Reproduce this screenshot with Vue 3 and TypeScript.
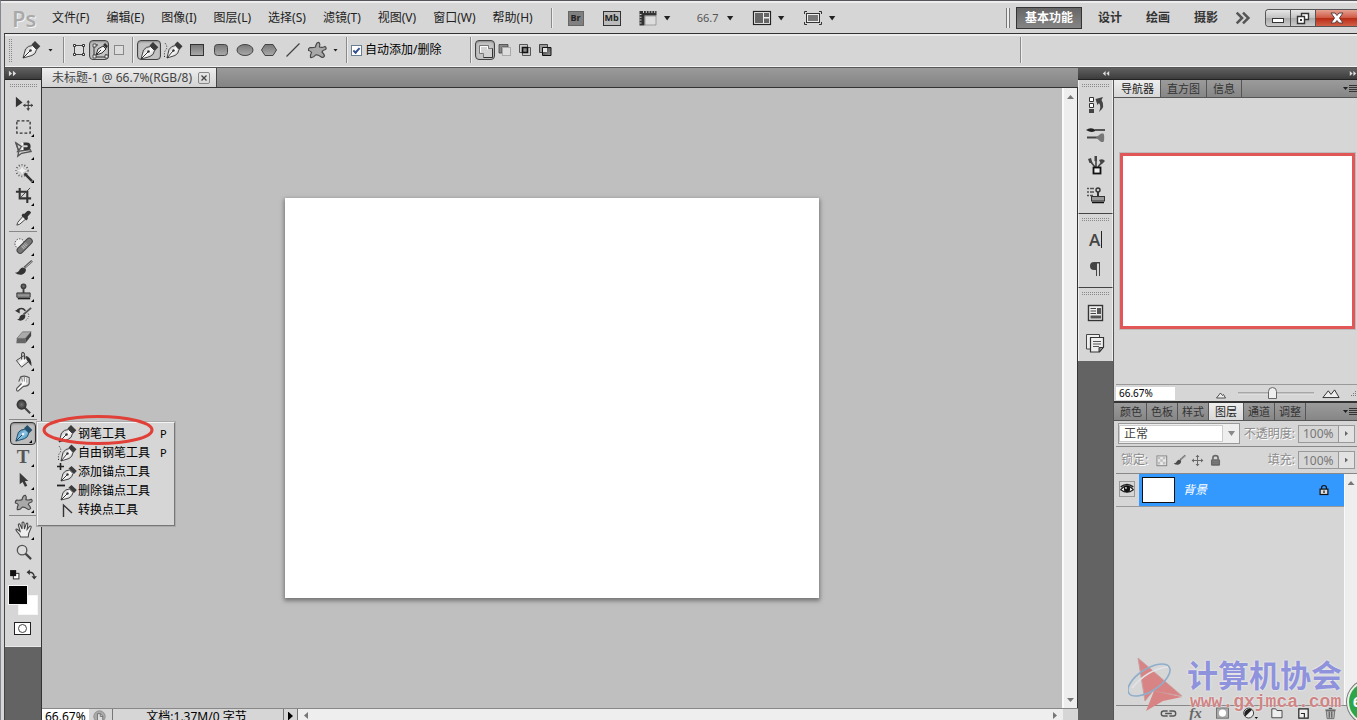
<script setup lang="ts">
import { ref } from 'vue'

interface Tool {
  id: string
  label: string
  more?: boolean
}

const menus = ['文件(F)', '编辑(E)', '图像(I)', '图层(L)', '选择(S)', '滤镜(T)', '视图(V)', '窗口(W)', '帮助(H)']
const workspaces = ['基本功能', '设计', '绘画', '摄影']

const toolGroups: Tool[][] = [
  [
    { id: 'move', label: '移动工具' },
    { id: 'marquee', label: '矩形选框工具', more: true },
    { id: 'lasso', label: '磁性套索工具', more: true },
    { id: 'wand', label: '魔棒工具', more: true },
    { id: 'crop', label: '裁剪工具', more: true },
    { id: 'dropper', label: '吸管工具', more: true },
  ],
  [
    { id: 'heal', label: '修复画笔工具', more: true },
    { id: 'brush', label: '画笔工具', more: true },
    { id: 'stamp', label: '仿制图章工具', more: true },
    { id: 'history', label: '历史记录画笔工具', more: true },
    { id: 'eraser', label: '橡皮擦工具', more: true },
    { id: 'bucket', label: '油漆桶工具', more: true },
    { id: 'smudge', label: '涂抹工具', more: true },
    { id: 'dodge', label: '减淡工具', more: true },
  ],
  [
    { id: 'bluepen', label: '钢笔', more: true },
    { id: 'type', label: '文字工具', more: true },
    { id: 'arrow', label: '路径选择工具', more: true },
    { id: 'blob', label: '自定形状工具', more: true },
  ],
  [
    { id: 'hand', label: '抓手工具', more: true },
    { id: 'zoom', label: '缩放工具' },
  ],
]

const penMenu = [
  { icon: 'pen', label: '钢笔工具', key: 'P' },
  { icon: 'freepen', label: '自由钢笔工具', key: 'P' },
  { icon: 'addpen', label: '添加锚点工具', key: '' },
  { icon: 'delpen', label: '删除锚点工具', key: '' },
  { icon: 'convert', label: '转换点工具', key: '' },
]

const pathModes = [
  { id: 'shapelayer', label: '形状图层' },
  { id: 'pathmode', label: '路径' },
  { id: 'fillmode', label: '填充像素' },
]
const shapes = [
  { id: 'pen', label: '钢笔' },
  { id: 'freepen', label: '自由钢笔' },
  { id: 'rect', label: '矩形' },
  { id: 'rrect', label: '圆角矩形' },
  { id: 'ellipse', label: '椭圆' },
  { id: 'polygon', label: '多边形' },
  { id: 'line', label: '直线' },
  { id: 'blob', label: '自定形状' },
]
const combines = [
  { id: 'union', label: '添加到路径区域' },
  { id: 'subtract', label: '从路径区域减去' },
  { id: 'intersect', label: '交叉路径区域' },
  { id: 'exclude', label: '重叠路径区域除外' },
]
const dockGroups = [
  [
    { id: 'd-history', label: '历史记录' },
    { id: 'd-brushes', label: '画笔' },
    { id: 'd-presets', label: '画笔预设' },
    { id: 'd-clone', label: '仿制源' },
  ],
  [
    { id: 'd-char', label: '字符' },
    { id: 'd-para', label: '段落' },
  ],
  [
    { id: 'd-comps', label: '图层复合' },
    { id: 'd-notes', label: '注释' },
  ],
]
const navTabs = ['导航器', '直方图', '信息']
const layerTabs = ['颜色', '色板', '样式', '图层', '通道', '调整']
const locks = [
  { id: 'checker', label: '锁定透明像素' },
  { id: 'brush', label: '锁定图像像素' },
  { id: 'cross', label: '锁定位置' },
  { id: 'padlock', label: '锁定全部' },
]
const layerActions = [
  { id: 'link', label: '链接图层' },
  { id: 'fx', label: '图层样式' },
  { id: 'mask', label: '图层蒙版' },
  { id: 'adjust', label: '调整图层' },
  { id: 'folder', label: '新建组' },
  { id: 'newlayer', label: '新建图层' },
  { id: 'trash', label: '删除图层' },
]

const workspace = ref('基本功能')
const activeTool = ref('bluepen')
const navTab = ref('导航器')
const layerTab = ref('图层')
const shape = ref('pen')
const autoAdd = ref(true)
const navZoom = ref(45)
</script>

<template>
  <div class="app">
    <svg class="defs" aria-hidden="true">
      <defs>
        <linearGradient id="g-nib" x1="0" y1="0" x2="1" y2="1">
          <stop offset="0" stop-color="#999" /><stop offset=".5" stop-color="#fff" /><stop offset="1" stop-color="#aaa" />
        </linearGradient>
        <linearGradient id="g-blue" x1="0" y1="0" x2="1" y2="1">
          <stop offset="0" stop-color="#2f6d94" /><stop offset=".5" stop-color="#8cc8e8" /><stop offset="1" stop-color="#2e739e" />
        </linearGradient>
        <linearGradient id="g-gray" x1="0" y1="0" x2="0" y2="1">
          <stop offset="0" stop-color="#777" /><stop offset="1" stop-color="#aaa" />
        </linearGradient>
        <linearGradient id="g-dark" x1="0" y1="0" x2="1" y2="1">
          <stop offset="0" stop-color="#333" /><stop offset="1" stop-color="#999" />
        </linearGradient>
        <radialGradient id="g-ball"><stop offset="0" stop-color="#777" /><stop offset="1" stop-color="#2c2c2c" /></radialGradient>
      </defs>
      <symbol id="pen" viewBox="0 0 20 20">
        <path d="M2 18 4.500 9Q7 5.500 11.500 5.500L15.500 9.500Q15 14 11 15.500Z" fill="url(#g-nib)" stroke="#444" />
        <path d="M10.500 4.500 14 1 19.300 6.300 16 9.800Z" fill="#3c3c3c" />
        <path d="M2 18 9 11" stroke="#333" /><circle cx="9.500" cy="10.500" r="1.300" fill="#333" />
      </symbol>
      <symbol id="bluepen" viewBox="0 0 20 20">
        <path d="M2 18 4.500 9Q7 5.500 11.500 5.500L15.500 9.500Q15 14 11 15.500Z" fill="url(#g-blue)" stroke="#204a66" />
        <path d="M10.500 4.500 14 1 19.300 6.300 16 9.800Z" fill="#24516e" />
        <path d="M2 18 9 11" stroke="#173d58" /><circle cx="9.500" cy="10.500" r="1.300" fill="#eef" />
      </symbol>
      <symbol id="freepen" viewBox="0 0 20 20">
        <path d="M4 18 6 9.500Q8.500 5.500 12.500 5.500L16 9.500Q15.500 14 12 15.500Z" fill="url(#g-nib)" stroke="#444" />
        <path d="M11.500 4.500 14.500 1.500 19.500 6.300 16.500 9.700Z" fill="#3c3c3c" />
        <path d="M4 18 10 11" stroke="#333" /><circle cx="10.500" cy="10.500" r="1.200" fill="#333" />
        <path d="M1.500 17V14Q1 12 3 9.500T2 3" fill="none" stroke="#333" stroke-dasharray="1.200 1.500" />
      </symbol>
      <symbol id="addpen" viewBox="0 0 20 20">
        <path d="M4 19 6 11.500Q8.500 8 12.500 8L16 11.500Q15.500 15 12 17Z" fill="url(#g-nib)" stroke="#444" />
        <path d="M11.500 6.500 14.500 4 19.800 9 17 12Z" fill="#3c3c3c" />
        <path d="M4 19 10 13" stroke="#333" /><circle cx="10.500" cy="12.500" r="1.200" fill="#333" />
        <path d="M0 4.500H7M3.500 1V8" stroke="#222" stroke-width="1.600" />
      </symbol>
      <symbol id="delpen" viewBox="0 0 20 20">
        <path d="M4 19 6 11.500Q8.500 8 12.500 8L16 11.500Q15.500 15 12 17Z" fill="url(#g-nib)" stroke="#444" />
        <path d="M11.500 6.500 14.500 4 19.800 9 17 12Z" fill="#3c3c3c" />
        <path d="M4 19 10 13" stroke="#333" /><circle cx="10.500" cy="12.500" r="1.200" fill="#333" />
        <path d="M0 4.500H8" stroke="#222" stroke-width="1.800" />
      </symbol>
      <symbol id="convert" viewBox="0 0 20 20">
        <path d="M6.500 17V5L15 13" fill="none" stroke="#333" stroke-width="1.400" />
      </symbol>
      <symbol id="move" viewBox="0 0 20 20">
        <path d="M2 3V14L9 9Z" fill="#333" />
        <path d="M15 7V17M10 12H20" stroke="#444" stroke-width="1.200" />
        <path d="M13 9 15 6.500 17 9ZM13 15 15 17.500 17 15ZM12 10 9.500 12 12 14ZM18 10 20 12 18 14Z" fill="#444" />
      </symbol>
      <symbol id="marquee" viewBox="0 0 20 20">
        <rect x="3" y="4" width="14" height="13" fill="none" stroke="#333" stroke-width="1.400" stroke-dasharray="3 2" />
      </symbol>
      <symbol id="lasso" viewBox="0 0 20 20">
        <path d="M2 3 8 7 4 12 17 10 18 12 8 14 4 17 5 12Z" fill="none" stroke="#555" stroke-width="1.400" />
        <path d="M2 3 5 12" stroke="#555" stroke-width="1.400" />
        <path d="M9 4H13.500A2.500 2.500 0 0 1 13.500 9H9" fill="none" stroke="#333" stroke-width="3" />
        <path d="M8 2.500H10V5.500H8ZM8 7.500H10V10.500H8Z" fill="#fff" />
      </symbol>
      <symbol id="wand" viewBox="0 0 20 20">
        <path d="M11 11 19 19" stroke="#333" stroke-width="2.600" />
        <circle cx="8.500" cy="8" r="6" fill="none" stroke="#555" stroke-width="2" stroke-dasharray="1 2" />
        <path d="M8.500 2 10 6 14.500 8 10 10 8.500 14 7 10 2.500 8 7 6Z" fill="#eee" stroke="#aaa" stroke-width=".5" />
      </symbol>
      <symbol id="crop" viewBox="0 0 20 20">
        <path d="M6 2V13H18M2 6H14V18" fill="none" stroke="#333" stroke-width="2.200" /><path d="M6 13 17 2" stroke="#444" />
      </symbol>
      <symbol id="dropper" viewBox="0 0 20 20">
        <path d="M3 17 4 14 10 7 13 10 6 16Z" fill="#eee" stroke="#444" />
        <path d="M9 5 11 5 14 2Q17 1 18 4L14.500 8V10.500L13 12 8 7Z" fill="#333" />
      </symbol>
      <symbol id="heal" viewBox="0 0 20 20">
        <circle cx="6" cy="8" r="5" fill="#eee" stroke="#222" stroke-dasharray="1.200 1.600" />
        <path d="M6.500 15 16 5.500" stroke="#444" stroke-width="7.500" stroke-linecap="round" />
        <path d="M6.500 15 16 5.500" stroke="#777" stroke-width="5.500" stroke-linecap="round" /><path d="M9 12.500 13.500 8" stroke="#bbb" stroke-width="4" stroke-dasharray="1 1" />
      </symbol>
      <symbol id="brush" viewBox="0 0 20 20">
        <path d="M11 9 19 2" stroke="#555" stroke-width="2.500" /><path d="M12 8.500 19 2.500" stroke="#bbb" />
        <path d="M1 14.500Q5 14 6 11 9 7 12.500 10.500 13 15 8 16.500 4 17 1 14.500Z" fill="#333" />
      </symbol>
      <symbol id="stamp" viewBox="0 0 20 20">
        <circle cx="10" cy="4.500" r="3" fill="url(#g-ball)" /><path d="M9 6H11V12H9Z" fill="#444" />
        <path d="M3 11.500H17V16H3Z" fill="url(#g-gray)" stroke="#333" /><path d="M4 17.500H17" stroke="#222" stroke-width="1.500" />
      </symbol>
      <symbol id="history" viewBox="0 0 20 20">
        <path d="M10 10 18 3" stroke="#555" stroke-width="2" /><path d="M3 15Q6 15 6 12 9 8.500 12 11 12 15.500 7 16.500 5 16.500 3 15Z" fill="#333" />
        <path d="M3 6Q8 1.500 12 6" fill="none" stroke="#333" stroke-width="1.600" /><path d="M1 6 6 4V9Z" fill="#333" />
        <path d="M15 9Q17 14 11 17" fill="none" stroke="#444" stroke-dasharray="1 1.500" />
      </symbol>
      <symbol id="eraser" viewBox="0 0 20 20">
        <path d="M3 11 9 4H18L12 11Z" fill="#aaa" stroke="#666" stroke-width=".7" /><path d="M3 11H12V16H2.500Z" fill="#666" /><path d="M12 11 18 4V8.500L12 16Z" fill="#444" />
      </symbol>
      <symbol id="bucket" viewBox="0 0 20 20">
        <path d="M2.500 10 10 5 15.500 11 8 17Z" fill="url(#g-nib)" stroke="#444" /><path d="M8 9V3Q9 0 11 3V9" fill="none" stroke="#444" stroke-width="1.200" />
        <path d="M12 5Q18.500 6 18.500 16L14.500 11Z" fill="#333" />
      </symbol>
      <symbol id="smudge" viewBox="0 0 20 20">
        <path d="M5 8 7 3Q12 1 16 4V10Q15 13 10 13L4 18Q2 18 3 15L8 10" fill="url(#g-nib)" stroke="#555" stroke-width="1.200" /><path d="M8 4 9 8M11 3V8M13.500 4V9" stroke="#777" stroke-width=".8" />
      </symbol>
      <symbol id="dodge" viewBox="0 0 20 20">
        <path d="M11 11 17 17" stroke="#444" stroke-width="2.200" /><circle cx="8" cy="8" r="5.300" fill="url(#g-ball)" />
      </symbol>
      <symbol id="arrow" viewBox="0 0 20 20">
        <path d="M6 3V15L9 12.500 11.500 17.500 14 16.500 11.500 11.500H15Z" fill="#3a3a3a" />
      </symbol>
      <symbol id="blob" viewBox="0 0 20 20">
        <path d="M9 5Q10 2 12 2.500 13.500 4 12.500 7 15 8 18 6.500 20 8 18.500 9.500 15.500 10 15 12 17 14 17.500 16 16 18.500 13.500 16.500 11 14.500 8.500 15 6.500 18 3.500 17.500 3 15 4.500 12.500 4 11 1.500 10.500 1 8.500 3 7.500 6 8 8.500 7Z" fill="#a8a8a8" stroke="#484848" stroke-width="1.200" />
      </symbol>
      <symbol id="hand" viewBox="0 0 20 20">
        <path d="M7 18Q6 15 3 12 1 9.500 3 9.500L6.500 12 4.500 5Q5.500 3 6.500 5L8.500 9.500 8.500 3Q9.500 1 10.500 3L11 9.500 13 3.500Q14.500 2.500 14.500 4.500L13.800 10 16.500 6.500Q18.500 6 18 8L15.500 14 15 18Z" fill="#eee" stroke="#444" stroke-width="1.100" />
      </symbol>
      <symbol id="zoom" viewBox="0 0 20 20">
        <path d="M12 11 18 17" stroke="#444" stroke-width="2.400" /><circle cx="8.500" cy="7.500" r="5" fill="#ddd" stroke="#555" stroke-width="1.400" />
      </symbol>
      <symbol id="shapelayer" viewBox="0 0 20 20">
        <rect x="5.500" y="5.500" width="9" height="9" fill="#ddd" stroke="#444" />
        <path d="M4.500 4.500H6.500V6.500H4.500ZM13.500 4.500H15.500V6.500H13.500ZM4.500 13.500H6.500V15.500H4.500ZM13.500 13.500H15.500V15.500H13.500Z" fill="#fff" stroke="#333" />
      </symbol>
      <symbol id="pathmode" viewBox="0 0 20 20">
        <path d="M4 4V16H16V13M4 4H8" fill="none" stroke="#333" /><path d="M3 3H6V6H3ZM3 14H6V17H3ZM15 14H18V17H15Z" fill="#eee" stroke="#333" stroke-width=".8" />
        <path d="M6 14 8 8 13 5 16 8 12 12Z" fill="url(#g-nib)" stroke="#333" /><path d="M13 4 15 2 18 5 16.500 7.500Z" fill="#333" /><path d="M6 14 11 9" stroke="#333" />
      </symbol>
      <symbol id="fillmode" viewBox="0 0 20 20"><rect x="5.500" y="5.500" width="9" height="9" fill="#ddd" stroke="#888" /></symbol>
      <symbol id="rect" viewBox="0 0 20 20"><rect x="3.500" y="4.500" width="13" height="11" fill="url(#g-gray)" stroke="#333" /></symbol>
      <symbol id="rrect" viewBox="0 0 20 20"><rect x="3.500" y="4.500" width="13" height="11" rx="3" fill="url(#g-gray)" stroke="#444" /></symbol>
      <symbol id="ellipse" viewBox="0 0 20 20"><ellipse cx="10" cy="10" rx="8" ry="5.500" fill="url(#g-gray)" stroke="#444" /></symbol>
      <symbol id="polygon" viewBox="0 0 20 20"><path d="M6 4.500H14L17.500 10 14 15.500H6L2.500 10Z" fill="url(#g-gray)" stroke="#444" /></symbol>
      <symbol id="line" viewBox="0 0 20 20"><path d="M3.500 16.500 16.500 3.500" stroke="#444" stroke-width="1.300" /></symbol>
      <symbol id="union" viewBox="0 0 20 20"><path d="M3.500 4.500H12.500V7.500H16.500V16.500H7.500V12.500H3.500Z" fill="#d2d2d2" stroke="#777" /><path d="M4.500 11.500V5.500H11.500V8.500" fill="none" stroke="#fff" /><path d="M7.500 16.500H16.500V7.500" fill="none" stroke="#333" /></symbol>
      <symbol id="subtract" viewBox="0 0 20 20"><path d="M4 13V4.500H13V7H7V13Z" fill="#888" stroke="#444" stroke-width=".8" /><rect x="7.500" y="7.500" width="8" height="8" fill="#ddd" stroke="#aaa" /></symbol>
      <symbol id="intersect" viewBox="0 0 20 20"><path d="M4.500 4.500H12.500V12.500H4.500ZM7.500 7.500H15.500V15.500H7.500Z" fill="#ccc" stroke="#555" /><path d="M7.500 7.500H12.500V12.500H7.500Z" fill="#888" stroke="#111" stroke-width="1.600" /></symbol>
      <symbol id="exclude" viewBox="0 0 20 20"><path d="M4.500 4.500H12.500V12.500H4.500Z" fill="#999" stroke="#444" /><path d="M7.500 7.500H16V15.500H7.500Z" fill="url(#g-dark)" stroke="#111" /><path d="M8 8H12V12H8Z" fill="#e5e5e5" /></symbol>
      <symbol id="ruler" viewBox="0 0 20 20"><path d="M1.500 3H18.500V7.500H6.500V17.500H1.500Z" fill="#333" /><path d="M7 8H18V17H7Z" fill="#ddd" stroke="#777" stroke-width=".6" /><path d="M5 4H18M2.500 6V17" stroke="#ccc" stroke-width="2" stroke-dasharray="1 1.800" /></symbol>
      <symbol id="layout" viewBox="0 0 20 20"><rect x="1.500" y="3.500" width="17" height="13" fill="#eee" stroke="#222" stroke-width="1.200" /><path d="M3 5H11V15H3ZM12 5H17V9H12ZM12 10.500H17V15H12Z" fill="#666" /></symbol>
      <symbol id="screen" viewBox="0 0 20 20"><path d="M1.500 6V3.500H4M16 3.500H18.500V6M18.500 14V16.500H16M4 16.500H1.500V14" fill="none" stroke="#333" /><rect x="3.500" y="5.500" width="13" height="9" fill="#eee" stroke="#333" /><path d="M5 7H15V13H5Z" fill="#777" /></symbol>
      <symbol id="d-history" viewBox="0 0 20 20"><path d="M3.500 2.500H7.500V6.500H3.500ZM3.500 8.500H7.500V12.500H3.500Z" fill="#fff" stroke="#333" /><path d="M3 14H8V18H3Z" fill="#444" /><path d="M9.500 4 17 2 15.500 5Q20 12 13 17 15.500 11 13 8L11.500 10Z" fill="#444" /></symbol>
      <symbol id="d-brushes" viewBox="0 0 20 20"><path d="M0 5Q4 2 8 4L10 5.500Q6 8.500 0 5Z" fill="#222" /><path d="M9 5H19" stroke="#555" stroke-width="2" /><path d="M1 12.500H12" stroke="#444" stroke-width="2" /><path d="M10 12.500 15 8.500H17.500Q19 12 17.500 17H15Z" fill="#777" /></symbol>
      <symbol id="d-presets" viewBox="0 0 20 20"><path d="M10 13V4M9 12 4 6M12 12 16 7" stroke="#444" stroke-width="1.600" /><path d="M8.500 1H11V6H8.500ZM2 4 5 3 6.500 8 3.500 8ZM13 5Q17 3 19 6L15.500 9.500Z" fill="#444" /><rect x="7.500" y="12.500" width="7" height="6" fill="#eee" stroke="#111" stroke-width="1.800" /></symbol>
      <symbol id="d-clone" viewBox="0 0 20 20"><path d="M1 3.500H3M1 7H3M1 10.500H3M4 3.500H8M4 7H8M4 10.500H7" stroke="#555" stroke-width="1.500" /><circle cx="12" cy="5" r="2" fill="#ccc" stroke="#333" stroke-width="1.400" /><path d="M12 7V12" stroke="#333" stroke-width="2" /><rect x="5.500" y="11.500" width="13" height="4.500" fill="#999" stroke="#333" /><path d="M6 17.500H18" stroke="#111" stroke-width="1.500" /></symbol>
      <symbol id="d-para" viewBox="0 0 20 20"><path d="M14 3H8A4 4 0 0 0 8 11H10V17H11V4.500H13V17H14Z" fill="#444" /></symbol>
      <symbol id="d-comps" viewBox="0 0 20 20"><rect x="2.500" y="2.500" width="14" height="15" fill="#eee" stroke="#333" stroke-width="1.400" /><path d="M4.500 5.500H10M4.500 8H10M4.500 10.500H10" stroke="#444" /><path d="M11 5H15V11H11ZM4.500 12.500H15V15.500H4.500Z" fill="#555" /></symbol>
      <symbol id="d-notes" viewBox="0 0 20 20"><path d="M.5 1.500H13.500V16H.5Z" fill="#eee" stroke="#444" /><path d="M4.500 4.500H17.500V14L13.500 19H4.500Z" fill="#eee" stroke="#333" stroke-width="1.200" /><path d="M7 8.500H15M7 11H15M7 13.500H13" stroke="#555" /><path d="M13 19V14.500H17.500Z" fill="#888" stroke="#333" /></symbol>
      <symbol id="checker" viewBox="0 0 20 20"><rect x="3" y="3" width="15" height="15" fill="#eee" stroke="#777" stroke-width="1.500" /><path d="M4 4H8V8H4ZM12 4H16V8H12ZM8 8H12V12H8ZM4 12H8V16H4ZM12 12H16V16H12Z" fill="#bbb" /></symbol>
      <symbol id="cross" viewBox="0 0 20 20"><path d="M10 2V18M2 10H18" stroke="#555" stroke-width="1.500" /><path d="M7 4.500 10 1 13 4.500ZM7 15.500 10 19 13 15.500ZM4.500 7 1 10 4.500 13ZM15.500 7 19 10 15.500 13Z" fill="#555" /></symbol>
      <symbol id="padlock" viewBox="0 0 20 20"><path d="M6 9V6Q6 2.500 10 2.500T14 6V9" fill="none" stroke="#555" stroke-width="2.500" /><rect x="3" y="8" width="14" height="10" rx="2" fill="#555" /><path d="M5 11H15M5 14H15" stroke="#888" /></symbol>
      <symbol id="lock" viewBox="0 0 20 20"><path d="M6 9V6Q6 2.500 10 2.500T14 6V9" fill="none" stroke="#111" stroke-width="2" /><rect x="3.500" y="8.500" width="13" height="9" fill="#ddd" stroke="#111" stroke-width="2" /><path d="M10 11V15" stroke="#111" stroke-width="2" /></symbol>
      <symbol id="eye" viewBox="0 0 20 20"><path d="M1 11Q10 0 19 11 10 18 1 11Z" fill="#fff" stroke="#222" stroke-width="1.600" /><circle cx="10" cy="10" r="4.500" fill="#111" /><circle cx="8.500" cy="8.500" r="1.200" fill="#fff" /><path d="M1 7Q10 0 19 7" fill="none" stroke="#222" stroke-width="2" /></symbol>
      <symbol id="link" viewBox="0 0 20 20"><path d="M9 7H4.500A3 3 0 0 0 4.500 13H9M11 7H15.500A3 3 0 0 1 15.500 13H11M6 10H14" fill="none" stroke="#555" stroke-width="1.600" /></symbol>
      <symbol id="mask" viewBox="0 0 20 20"><rect x="3" y="3.500" width="14" height="12" fill="#aaa" stroke="#666" /><circle cx="10" cy="9.500" r="4.200" fill="#fff" /></symbol>
      <symbol id="adjust" viewBox="0 0 20 20"><circle cx="9" cy="9.500" r="5.800" fill="#eee" stroke="#222" /><path d="M5 13.500A5.800 5.800 0 0 1 13 5.500Z" fill="#222" /><path d="M16 14H20L18 16.500Z" fill="#111" /></symbol>
      <symbol id="folder" viewBox="0 0 20 20"><path d="M4.500 4.500H9L10.500 6.500H16.500V15H4.500Z" fill="#eee" stroke="#333" /></symbol>
      <symbol id="newlayer" viewBox="0 0 20 20"><path d="M4.500 4.500H15.500V15.500H4.500Z" fill="#eee" stroke="#222" stroke-width="1.400" /><path d="M7 10H11V15" fill="#fff" stroke="#222" stroke-width="1.400" /></symbol>
      <symbol id="trash" viewBox="0 0 20 20"><path d="M5 7H15L14 16H6Z" fill="#bbb" stroke="#666" /><path d="M4 6H16M8 4H12M8.500 8V15M11.500 8V15" stroke="#555" stroke-width="1.300" /></symbol>
      <symbol id="chevrons" viewBox="0 0 20 20"><path d="M3 4 9 10 3 16M10 4 16 10 10 16" fill="none" stroke="#555" stroke-width="2.800" /></symbol>
      <symbol id="flyout" viewBox="0 0 14 14"><path d="M0 5H5L2.500 8Z" fill="#222" /><path d="M6 3.500H14M6 5.500H14M6 7.500H14M6 9.500H14" stroke="#333" /></symbol>
      <symbol id="collapse" viewBox="0 0 20 20"><path d="M9 4V16L2 10ZM18 4V16L11 10Z" fill="#ddd" /></symbol>
      <symbol id="expand" viewBox="0 0 20 20"><path d="M2 4V16L9 10ZM11 4V16L18 10Z" fill="#ddd" /></symbol>
      <symbol id="swap" viewBox="0 0 20 20"><path d="M5 6Q14 5 15 14" fill="none" stroke="#333" stroke-width="2.400" /><path d="M7 1V11L1 6ZM10 13H20L15 19Z" fill="#333" /></symbol>
      <symbol id="peak" viewBox="0 0 20 20"><path d="M1 16 9 6 13 11 15 9 19 16Z" fill="#eee" stroke="#222" stroke-width="1.500" /></symbol>
      <symbol id="peaks" viewBox="0 0 20 12"><path d="M1 10.500 7 3 10 7 14 2 19 10.500Z" fill="#eee" stroke="#222" /></symbol>
    </svg>

    <header class="menubar">
      <span class="logo">Ps</span>
      <nav class="menus" aria-label="主菜单">
        <button v-for="m in menus" :key="m" type="button">{{ m }}</button>
      </nav>
      <i class="rule"></i>
      <div class="quick">
        <button type="button" class="badge bridge">Br</button>
        <button type="button" class="badge mini">Mb</button>
        <button type="button" class="drop" aria-label="查看额外内容"><svg><use href="#ruler" /></svg><i class="caret"></i></button>
        <label class="zoom-pick">
          <select aria-label="缩放级别"><option>66.7</option></select>
          <i class="caret"></i>
        </label>
        <button type="button" class="drop" aria-label="排列文档"><svg><use href="#layout" /></svg><i class="caret"></i></button>
        <button type="button" class="drop" aria-label="屏幕模式"><svg><use href="#screen" /></svg><i class="caret"></i></button>
      </div>
      <div class="workspaces">
        <i class="double"></i>
        <button v-for="w in workspaces" :key="w" type="button" :class="{ on: workspace === w }" @click="workspace = w">{{ w }}</button>
        <button type="button" class="chev" aria-label="更多工作区"><svg><use href="#chevrons" /></svg></button>
      </div>
      <div class="window-buttons">
        <button type="button" aria-label="最小化">
          <svg viewBox="0 0 24 16"><rect x="6.500" y="8.500" width="11" height="4" fill="#fff" stroke="#333" /></svg>
        </button>
        <button type="button" aria-label="还原">
          <svg viewBox="0 0 24 16"><path d="M10.500 3.500H17.500V9.500H10.500Z" fill="#fff" stroke="#333" stroke-width="1.400" /><path d="M6.500 6.500H13.500V13.500H6.500Z" fill="#fff" stroke="#333" stroke-width="1.400" /><rect x="9" y="9" width="2" height="2" fill="#333" /></svg>
        </button>
        <button type="button" class="close" aria-label="关闭">
          <svg viewBox="0 0 24 16"><path d="M6 3H10L12 5.500 14 3H18L14.500 8 18 13H14L12 10.500 10 13H6L9.500 8Z" fill="#fff" stroke="#5b4040" /></svg>
        </button>
      </div>
    </header>

    <div class="shell">
      <section class="options" aria-label="工具选项">
        <i class="grip-v"></i>
        <button type="button" class="preset" aria-label="工具预设"><svg><use href="#pen" /></svg></button>
        <i class="caret small"></i>
        <i class="rule gap-l"></i>
        <div class="set modes">
          <button v-for="p in pathModes" :key="p.id" type="button" :class="{ pressed: p.id === 'pathmode' }" :aria-label="p.label"><svg><use :href="'#' + p.id" /></svg></button>
        </div>
        <i class="rule"></i>
        <div class="set shapes">
          <button v-for="s in shapes" :key="s.id" type="button" :class="{ pressed: shape === s.id }" :aria-label="s.label" @click="shape = s.id"><svg><use :href="'#' + s.id" /></svg></button>
        </div>
        <i class="caret small"></i>
        <i class="rule gap-s"></i>
        <label class="auto"><input v-model="autoAdd" type="checkbox" /><span>自动添加/删除</span></label>
        <i class="rule gap-m"></i>
        <div class="set combos">
          <button v-for="c in combines" :key="c.id" type="button" :class="{ pressed: c.id === 'union' }" :aria-label="c.label"><svg><use :href="'#' + c.id" /></svg></button>
        </div>
        <i class="rule far"></i>
      </section>

      <main class="body">
        <aside class="toolbox">
          <div class="strip"><svg><use href="#expand" /></svg></div>
          <div class="tools">
            <i class="grip-h"></i>
            <div v-for="(g, gi) in toolGroups" :key="gi" class="group">
              <button v-for="t in g" :key="t.id" type="button" class="tool" :class="{ active: activeTool === t.id, more: t.more }" :aria-label="t.label" @click="activeTool = t.id">
                <span v-if="t.id === 'type'" class="type-glyph">T</span>
                <svg v-else><use :href="'#' + t.id" /></svg>
              </button>
              <div v-if="g[0].id === 'bluepen'" class="pen-menu" role="menu">
                <button v-for="p in penMenu" :key="p.label" type="button" role="menuitem">
                  <svg><use :href="'#' + p.icon" /></svg><span>{{ p.label }}</span><kbd>{{ p.key }}</kbd>
                </button>
                <svg class="ring" viewBox="0 0 114 34" aria-hidden="true"><ellipse cx="57" cy="17" rx="54" ry="13.500" fill="none" stroke="#e04038" stroke-width="3" /></svg>
              </div>
            </div>
            <div class="mini-row">
              <button type="button" aria-label="默认颜色"><svg viewBox="0 0 20 20"><rect x="8" y="8" width="10" height="10" fill="#fff" stroke="#444" stroke-width="2" /><rect x="2" y="2" width="11" height="11" fill="#111" /></svg></button>
              <button type="button" aria-label="切换颜色"><svg><use href="#swap" /></svg></button>
            </div>
            <div class="swatches">
              <button type="button" class="back" aria-label="背景色"></button>
              <button type="button" class="front" aria-label="前景色"></button>
            </div>
            <button type="button" class="quickmask" aria-label="快速蒙版"><i></i></button>
          </div>
        </aside>

        <section class="document">
          <div class="tabbar">
            <div class="doctab"><span>未标题-1 @ 66.7%(RGB/8)</span><button type="button" aria-label="关闭文档"><svg viewBox="0 0 12 12"><path d="M3 3 9 9M9 3 3 9" stroke="#444" stroke-width="1.500" /></svg></button></div>
          </div>
          <div class="workarea">
            <div class="stage"><div class="paper"></div></div>
            <div class="vscroll"><i class="tri up"></i><i class="tri down"></i></div>
          </div>
          <footer class="status">
            <input class="zoom-in" value="66.67%" aria-label="缩放" />
            <span class="clock"><svg viewBox="0 0 16 16"><circle cx="8" cy="8" r="7" fill="#aaa" stroke="#888" /><path d="M5.500 4.500H9L12 7.500V13H5.500Z" fill="#ddd" stroke="#666" /><path d="M9 4.500V8H12" fill="none" stroke="#666" /></svg></span>
            <span class="docsize">文档:1.37M/0 字节</span>
            <button type="button" class="play" aria-label="状态选项"><i></i></button>
            <div class="hscroll"><i class="tri left"></i><i class="tri right"></i></div>
          </footer>
        </section>

        <aside class="side">
          <div class="strip side-strip"><svg><use href="#collapse" /></svg><svg><use href="#expand" /></svg></div>
          <div class="side-body">
            <div class="dock">
              <div v-for="(g, gi) in dockGroups" :key="gi" class="dock-group">
                <i class="grip-h"></i>
                <button v-for="d in g" :key="d.id" type="button" :aria-label="d.label">
                  <span v-if="d.id === 'd-char'" class="char-glyph">A</span>
                  <svg v-else><use :href="'#' + d.id" /></svg>
                </button>
              </div>
            </div>
            <div class="panels">
              <section class="navigator">
                <div class="tabs nav-tabs" role="tablist">
                  <button v-for="t in navTabs" :key="t" type="button" role="tab" :class="{ on: navTab === t }" @click="navTab = t">{{ t }}</button>
                  <svg class="fly"><use href="#flyout" /></svg>
                </div>
                <div class="preview"><div class="thumb"></div></div>
                <div class="nav-zoom">
                  <input class="pct" value="66.67%" aria-label="导航器缩放" />
                  <svg class="pk"><use href="#peak" /></svg>
                  <input v-model="navZoom" class="slider" type="range" aria-label="缩放滑块" />
                  <svg class="pks"><use href="#peaks" /></svg>
                  <i class="corner"></i>
                </div>
              </section>
              <section class="layers">
                <div class="tabs layer-tabs" role="tablist">
                  <button v-for="t in layerTabs" :key="t" type="button" role="tab" :class="{ on: layerTab === t }" @click="layerTab = t">{{ t }}</button>
                  <svg class="fly"><use href="#flyout" /></svg>
                </div>
                <div class="row">
                  <span class="mode"><select aria-label="混合模式"><option>正常</option></select><i class="caret pale"></i></span>
                  <label class="num"><span>不透明度:</span><input value="100%" /></label><button type="button" class="step" aria-label="调整不透明度"><i></i></button>
                </div>
                <div class="row second">
                  <span class="emboss">锁定:</span>
                  <button v-for="l in locks" :key="l.id" type="button" class="lockbtn" :aria-label="l.label"><svg><use :href="'#' + l.id" /></svg></button>
                  <label class="num"><span>填充:</span><input value="100%" /></label><button type="button" class="step" aria-label="调整填充"><i></i></button>
                </div>
                <div class="list">
                  <div class="entries">
                    <div class="layer">
                      <button type="button" class="vis" aria-label="可见性"><svg><use href="#eye" /></svg></button>
                      <div class="layer-main"><i class="pic"></i><em>背景</em><svg><use href="#lock" /></svg></div>
                    </div>
                  </div>
                  <div class="vscroll narrow"><i class="tri up"></i></div>
                </div>
                <div class="actions">
                  <button v-for="a in layerActions" :key="a.id" type="button" :aria-label="a.label">
                    <span v-if="a.id === 'fx'" class="fx-glyph">fx</span>
                    <svg v-else><use :href="'#' + a.id" /></svg>
                  </button>
                </div>
              </section>
            </div>
          </div>
        </aside>
      </main>
    </div>

    <div class="mark">
      <svg viewBox="0 0 56 56">
        <path d="M10 2 54 40 25 35 17 45Z" fill="#d98484" stroke="#c9a0a0" />
        <path d="M26 35 54 41 35 45 18 55Z" fill="#d98484" />
        <ellipse cx="21" cy="24" rx="24" ry="11" transform="rotate(-33 21 24)" fill="none" stroke="#8faecb" stroke-width="1.600" />
        <path d="M4 32Q20 13 40 11" fill="none" stroke="#e2e4ea" stroke-width="1.600" />
      </svg>
      <div class="mark-text"><strong>计算机协会</strong><span>www.gxjmca.com</span></div>
    </div>
    <div class="orb">6</div>
  </div>
</template>

<style>
html,
body {
  margin: 0;
  overflow: hidden;
}
</style>

<style scoped>
.app {
  position: relative;
  display: flex;
  flex-direction: column;
  box-sizing: border-box;
  height: 100vh;
  overflow: hidden;
  border-top: 1px solid #55555a;
  border-left: 1px solid #85888e;
  background: #d6d6d6;
  color: #222;
  font: 12px/16px "Noto Sans", "Noto Sans CJK SC", sans-serif;
}
.app *,
.app *::before,
.app *::after {
  box-sizing: border-box;
}
.defs {
  position: absolute;
  width: 0;
  height: 0;
}
.type-glyph {
  color: #555;
  font: bold 19px/20px "Liberation Serif", serif;
}
.char-glyph {
  padding-right: 1px;
  border-right: 1px solid #222;
  color: #444;
  font: 600 17px/17px "Open Sans", sans-serif;
}
.fx-glyph {
  display: block;
  width: 17px;
  color: #666;
  font: italic bold 15px/14px "Liberation Serif", serif;
}
button,
input,
select {
  margin: 0;
  padding: 0;
  border: 0;
  border-radius: 0;
  background: none;
  color: inherit;
  font: inherit;
  appearance: none;
  outline: 0;
}
svg {
  display: block;
  flex: none;
  width: 20px;
  height: 20px;
}
.rule {
  flex: none;
  width: 2px;
  background: #8a8a8a;
  border-right: 1px solid #eee;
}
.caret {
  flex: none;
  width: 7px;
  height: 5px;
  background: #222;
  clip-path: polygon(0 0, 100% 0, 50% 100%);
}
.caret.small {
  width: 5px;
  height: 3px;
}

/* menu bar */
.menubar {
  display: flex;
  flex: none;
  align-items: center;
  height: 32px;
  border-top: 2px solid #ededed;
}
.logo {
  width: 51px;
  padding-left: 11px;
  color: #a9a9a9;
  font: 600 22px/30px "Open Sans", sans-serif;
  text-shadow: 1px 1px 0 #f4f4f4;
}
.menus {
  display: flex;
  gap: 17px;
}
.menubar > .rule {
  height: 20px;
  margin-left: 18px;
}
.quick {
  display: flex;
  align-items: center;
  margin-left: 15px;
}
.badge {
  width: 16px;
  height: 15px;
  border: 1px solid #666;
  background: #808080;
  color: #222;
  font: bold 9px/12px "Open Sans", sans-serif;
}
.badge.mini {
  width: 18px;
  margin: 0 17px 0 19px;
  border-color: #333;
  background: #bbb;
}
.drop {
  display: flex;
  align-items: center;
  gap: 6px;
  margin-right: 18px;
}
.zoom-pick {
  display: flex;
  align-items: center;
  width: 38px;
  margin: 0 17px 0 8px;
  color: #555;
}
.zoom-pick select {
  width: 30px;
  font-size: 11px;
}
.workspaces {
  display: flex;
  align-items: center;
  margin-left: auto;
  font-weight: bold;
}
.workspaces button {
  height: 22px;
  padding: 0 8px;
  margin-right: 8px;
  color: #333;
}
.workspaces button.on {
  border: 1px solid #333;
  background: linear-gradient(#666, #858585);
  color: #fff;
}
.workspaces .chev {
  width: 20px;
  padding: 0;
  margin-right: 11px;
}
.chev svg {
  width: 18px;
  height: 20px;
}
.double {
  width: 4px;
  height: 20px;
  margin-right: 6px;
  border: 1px solid #777;
  border-width: 0 1px;
  background: #eee;
}
.window-buttons {
  display: flex;
  height: 18px;
  border: 1px solid #555;
  border-right: 0;
  border-radius: 4px 0 0 4px;
  overflow: hidden;
}
.window-buttons button {
  display: grid;
  place-items: center;
  width: 25px;
  background: linear-gradient(#e6e6e6, #c2c2c2 50%, #aaa 51%, #ccc);
  border-right: 1px solid #555;
}
.window-buttons svg {
  width: 24px;
  height: 16px;
}
.window-buttons .close {
  width: 41px;
  border: 0;
  background: linear-gradient(#e6a191, #cf5a45 48%, #b82c14 52%, #d26046);
}

/* options bar */
.shell {
  display: flex;
  flex: 1;
  flex-direction: column;
  min-height: 0;
  margin-left: 3px;
  border-left: 1px solid #444;
  border-top: 1px solid #333;
}
.options {
  display: flex;
  flex: none;
  align-items: center;
  height: 34px;
  padding: 0 0 3px 4px;
  border-top: 2px solid #ececec;
  border-bottom: 1px solid #555;
  box-shadow: inset 0 -1px #f2f2f2;
}
.grip-v {
  width: 4px;
  height: 23px;
  background: conic-gradient(from 270deg at 1px 1px, #8a8a8a 90deg, transparent 0) 0 0 / 2px 2px;
}
.preset {
  display: grid;
  place-items: center;
  width: 35px;
}
.options .rule {
  height: 26px;
}
.options .gap-l {
  margin-left: 10px;
}
.set {
  display: flex;
}
.set button {
  display: grid;
  place-items: center;
  height: 20px;
  border-radius: 4px;
}
.modes {
  margin: 0 3px 0 4px;
}
.modes button,
.combos button {
  width: 20px;
}
.set .pressed {
  border: 1px solid #444;
  background: #c3c3c3;
  box-shadow: inset 0 1px 2px #888;
}
.shapes {
  margin: 0 4px 0 3px;
}
.shapes button {
  width: 24px;
}
.options .gap-s {
  margin-left: 8px;
}
.auto {
  display: flex;
  align-items: center;
  gap: 3px;
  margin-left: 3px;
  color: #000;
}
.auto input {
  display: grid;
  place-items: center;
  width: 11px;
  height: 11px;
  border: 1px solid #6b7f93;
  background: #fff;
}
.auto input:checked::before {
  content: "";
  width: 7px;
  height: 4px;
  border: solid #35508f;
  border-width: 0 0 2px 2px;
  transform: rotate(-48deg);
}
.options .gap-m {
  margin: 0 3px 0 29px;
}
.options .far {
  margin-left: auto;
  margin-right: 335px;
}

/* body */
.body {
  display: flex;
  flex: 1;
  min-height: 0;
}
.strip {
  flex: none;
  height: 12px;
  padding: 1px 3px;
  background: linear-gradient(#606060, #3c3c3c);
  border-bottom: 1px solid #222;
}
.strip svg {
  width: 9px;
  height: 9px;
}
.grip-h {
  display: block;
  width: 27px;
  height: 4px;
  margin: 0 auto;
  background: conic-gradient(from 270deg at 1px 1px, #8a8a8a 90deg, transparent 0) 0 0 / 2px 2px;
}
.toolbox {
  display: flex;
  flex: none;
  flex-direction: column;
  width: 37px;
  background: #636363;
  border-right: 1px solid #333;
}
.tools {
  padding: 4px 4px 11px;
  background: #d6d6d6;
  border-bottom: 1px solid #e8e8e8;
}
.tools > .grip-h {
  margin-bottom: 4px;
}
.group {
  position: relative;
}
.group + .group {
  margin-top: 1px;
  padding-top: 2px;
  border-top: 1px solid #888;
}
.tool {
  position: relative;
  display: grid;
  place-items: center;
  width: 28px;
  height: 23px;
}
.tool svg {
  width: 19px;
  height: 19px;
}
.tool.more::after {
  content: "";
  position: absolute;
  right: 3px;
  bottom: 1px;
  width: 3px;
  height: 3px;
  background: #000;
  clip-path: polygon(100% 0, 100% 100%, 0 100%);
}
.tool.active {
  width: 26px;
  margin-left: 1px;
  border: 1px solid #333;
  border-radius: 4px;
  background: #bdbdbd;
  box-shadow: inset 0 1px 2px #888;
}
.pen-menu {
  position: absolute;
  z-index: 3;
  top: 2px;
  left: 28px;
  width: 138px;
  padding: 1px 0 6px;
  border: 1px solid #777;
  border-top-color: #f4f4f4;
  border-left-color: #f4f4f4;
  background: #d6d6d6;
  color: #000;
  box-shadow: 0 0 0 1px #aaa;
}
.pen-menu button {
  display: flex;
  align-items: center;
  width: 100%;
  height: 19px;
  padding-left: 19px;
  text-align: left;
  white-space: nowrap;
}
.pen-menu button span {
  width: 83px;
  padding-left: 1px;
}
.pen-menu kbd {
  font-family: inherit;
  font-size: 11px;
}
.pen-menu .ring {
  position: absolute;
  top: -10px;
  left: 3px;
  width: 114px;
  height: 34px;
}
.mini-row {
  display: flex;
  gap: 6px;
  height: 21px;
  align-items: center;
}
.mini-row svg {
  width: 11px;
  height: 11px;
}
.swatches {
  display: grid;
  grid-template-columns: 10px 10px 10px;
  grid-template-rows: 10px 10px 10px;
  margin-left: -1px;
}
.front,
.back {
  border: 1px solid #f5f5f5;
}
.front {
  grid-area: 1 / 1 / 3 / 3;
  background: #000;
}
.back {
  grid-area: 2 / 2 / 4 / 4;
  background: #fff;
}
.quickmask {
  display: grid;
  place-items: center;
  width: 17px;
  height: 13px;
  margin: 7px 0 0 5px;
  border: 1px solid #222;
  background: #fff;
}
.quickmask i {
  width: 9px;
  height: 9px;
  border: 1px solid #444;
  border-radius: 50%;
}

/* document */
.document {
  display: flex;
  flex: 1;
  flex-direction: column;
  min-width: 0;
}
.tabbar {
  display: flex;
  flex: none;
  height: 20px;
  background: linear-gradient(#9a9a9a, #848484);
  border-bottom: 1px solid #333;
}
.doctab {
  display: flex;
  align-items: center;
  gap: 6px;
  padding: 0 6px 0 10px;
  background: linear-gradient(#eee, #d3d3d3);
  border-right: 1px solid #444;
  color: #444;
}
.doctab button {
  border: 1px solid #888;
  border-radius: 2px;
}
.doctab svg {
  width: 10px;
  height: 10px;
}
.workarea {
  display: flex;
  flex: 1;
  min-height: 0;
}
.stage {
  display: grid;
  flex: 1;
  place-items: center;
  background: #bfbfbf;
}
.paper {
  width: 534px;
  height: 400px;
  background: #fff;
  box-shadow: 0 2px 4px 1px #777;
}
.vscroll {
  display: flex;
  flex: none;
  flex-direction: column;
  justify-content: space-between;
  align-items: center;
  width: 16px;
  padding: 7px 0 6px;
  border-left: 2px solid #fafafa;
  border-right: 1px solid #333;
  background: #eee;
}
.tri {
  width: 7px;
  height: 4px;
  background: #777;
}
.up {
  clip-path: polygon(50% 0, 100% 100%, 0 100%);
}
.down {
  clip-path: polygon(0 0, 100% 0, 50% 100%);
}
.left,
.right {
  width: 4px;
  height: 7px;
}
.left {
  clip-path: polygon(100% 0, 100% 100%, 0 50%);
}
.right {
  clip-path: polygon(0 0, 100% 50%, 0 100%);
}
.status {
  display: flex;
  flex: none;
  height: 12px;
  overflow: hidden;
  border-top: 1px solid #888;
  color: #000;
}
.zoom-in {
  width: 47px;
  height: 16px;
  padding-left: 3px;
  background: #fff;
}
.clock {
  width: 23px;
  padding: 1px 0 0 4px;
}
.clock svg {
  width: 13px;
  height: 13px;
}
.docsize {
  width: 171px;
  padding-right: 3px;
  border-left: 1px solid #777;
  text-align: center;
}
.play {
  display: grid;
  place-items: center;
  width: 15px;
  height: 14px;
  border: 1px solid #777;
  border-width: 0 1px;
}
.play i {
  width: 5px;
  height: 9px;
  background: #000;
  clip-path: polygon(0 0, 100% 50%, 0 100%);
}
.hscroll {
  display: flex;
  flex: 1;
  justify-content: space-between;
  height: 14px;
  padding: 3px 6px 0;
  margin-right: 15px;
  background: #eee;
}

/* right side */
.side {
  display: flex;
  flex: none;
  flex-direction: column;
  width: 279px;
  background: #636363;
}
.side-strip {
  display: flex;
  justify-content: space-between;
  padding: 1px 0 1px 24px;
}
.side-strip svg {
  width: 8px;
}
.side-body {
  display: flex;
  flex: 1;
  min-height: 0;
}
.dock {
  flex: none;
  width: 36px;
  border-right: 1px solid #555;
}
.dock-group {
  padding: 4px 0 3px;
  background: #d6d6d6;
  border: 1px solid #eee;
  border-width: 0 1px;
}
.dock-group + .dock-group {
  border-top: 1px solid #444;
}
.dock-group .grip-h {
  margin-bottom: 2px;
}
.dock-group button {
  display: grid;
  place-items: center;
  width: 100%;
  height: 30px;
}
.panels {
  display: flex;
  flex: 1;
  flex-direction: column;
  min-width: 0;
  background: #d6d6d6;
}
.tabs {
  display: flex;
  flex: none;
  height: 18px;
  overflow: hidden;
  background: linear-gradient(#9b9b9b, #868686);
  border-bottom: 1px solid #555;
  font-size: 11px;
}
.tabs button {
  height: 18px;
  padding: 0 6px;
  border-right: 1px solid #555;
  color: #333;
}
.tabs .on {
  background: linear-gradient(#eee, #d6d6d6);
  color: #222;
}
.nav-tabs button:first-child {
  padding-left: 7px;
}
.layer-tabs {
  padding-left: 2px;
}
.layer-tabs button {
  padding: 0 4px;
}
.layer-tabs .on {
  padding: 0 6px;
}
.fly {
  width: 14px;
  height: 14px;
  margin: 2px 0 0 auto;
}
.navigator {
  display: flex;
  flex: none;
  flex-direction: column;
  height: 323px;
  border-bottom: 2px solid #333;
}
.preview {
  display: grid;
  flex: 1;
  align-items: center;
  padding: 0 2px 0 6px;
  margin-bottom: 1px;
}
.thumb {
  height: 176px;
  border: 3px solid #e15656;
  background: #fff;
  outline: 1px solid #bbb;
}
.nav-zoom {
  display: flex;
  flex: none;
  align-items: center;
  height: 17px;
  margin-left: 2px;
  border-top: 1px solid #999;
}
.pct {
  width: 59px;
  height: 13px;
  padding-left: 3px;
  background: #fff;
  color: #000;
  font-size: 10px;
}
.pk {
  width: 10px;
  height: 10px;
  margin: 3px 12px 0 41px;
}
.pks {
  width: 18px;
  height: 11px;
  margin-left: 8px;
}
.slider {
  width: 76px;
  height: 14px;
  background: linear-gradient(#999, #eee) center / 100% 3px no-repeat;
}
.slider::-webkit-slider-thumb {
  appearance: none;
  width: 9px;
  height: 12px;
  border: 1px solid #666;
  border-radius: 5px 5px 0 0;
  background: #eee;
}
.corner {
  width: 8px;
  height: 8px;
  margin-left: auto;
  background: conic-gradient(from 270deg at 1px 1px, #777 90deg, transparent 0) 0 0 / 2px 2px;
  clip-path: polygon(100% 0, 100% 100%, 0 100%);
}
.layers {
  display: flex;
  flex: 1;
  flex-direction: column;
  min-height: 0;
}
.row {
  display: flex;
  flex: none;
  align-items: center;
  height: 26px;
  margin-left: 2px;
  padding: 0 2px;
  border-bottom: 1px solid #888;
  color: #888;
}
.second {
  height: 27px;
  padding-left: 5px;
}
.mode {
  display: flex;
  align-items: center;
  width: 122px;
  height: 21px;
  border: 1px solid #999;
  background: #eee;
  color: #444;
}
.mode select {
  width: 104px;
  height: 17px;
  padding-left: 4px;
  margin-right: 5px;
  border: 1px solid #ccc;
  background: #fff;
}
.pale {
  background: #888;
}
.num {
  display: flex;
  align-items: center;
  gap: 3px;
  margin-left: auto;
}
.num span,
.emboss {
  color: #8c8c8c;
  text-shadow: 1px 1px 0 #fff;
}
.num input {
  width: 41px;
  height: 18px;
  padding-left: 4px;
  border: 1px solid #999;
  color: #777;
}
.step {
  display: grid;
  place-items: center;
  width: 16px;
  height: 18px;
  border: 1px solid #999;
  border-left: 0;
  background: #e2e2e2;
}
.step i {
  width: 3px;
  height: 5px;
  background: #666;
  clip-path: polygon(0 0, 100% 50%, 0 100%);
}
.emboss {
  width: 31px;
}
.lockbtn {
  display: grid;
  place-items: center;
  width: 18px;
  opacity: 0.85;
}
.lockbtn svg {
  width: 13px;
  height: 13px;
}
.list {
  display: flex;
  flex: 1;
  min-height: 0;
  margin-left: 2px;
}
.entries {
  flex: 1;
}
.layer {
  display: flex;
  height: 33px;
  border-bottom: 1px solid #999;
}
.vis {
  width: 16px;
  height: 16px;
  margin: 7px 4px 0 3px;
  border: 1px solid #999;
}
.vis svg {
  width: 14px;
  height: 14px;
}
.layer-main {
  display: flex;
  flex: 1;
  align-items: center;
  padding: 0 14px 0 3px;
  background: #3399ff;
  color: #fff;
}
.pic {
  width: 33px;
  height: 26px;
  margin-right: 8px;
  border: 1px solid #111;
  background: #fff;
}
.layer-main svg {
  width: 12px;
  height: 12px;
  margin-left: auto;
}
.narrow {
  width: 13px;
  border-right: 0;
  border-left-width: 1px;
}
.actions {
  display: flex;
  flex: none;
  align-items: flex-start;
  height: 15px;
  padding: 0 18px 0 44px;
  margin-left: 2px;
  justify-content: space-between;
  border-top: 1px solid #888;
}
.actions svg {
  width: 17px;
  height: 17px;
  margin-top: -1px;
}
.mark {
  position: absolute;
  z-index: 4;
  right: 15px;
  bottom: 8px;
  display: flex;
  align-items: flex-end;
  gap: 3px;
  pointer-events: none;
}
.mark svg {
  width: 56px;
  height: 56px;
}
.mark-text {
  display: flex;
  flex-direction: column;
  gap: 2px;
  color: #8f93dc;
  text-shadow: 0 0 2px #fff;
}
.mark strong {
  font: bold 31px/32px "Noto Sans CJK SC", sans-serif;
}
.mark span {
  padding-left: 3px;
  color: #cf8585;
  font: bold 18px/20px "Liberation Mono", monospace;
}
.orb {
  position: absolute;
  z-index: 5;
  right: -34px;
  bottom: -4px;
  width: 44px;
  height: 44px;
  padding-left: 4px;
  border: 2px solid #e8f3e8;
  border-radius: 50%;
  background: #2fa54a;
  box-shadow: 0 0 0 1px #777;
  color: #fff;
  font: bold 14px/40px "Noto Sans", sans-serif;
}
</style>
